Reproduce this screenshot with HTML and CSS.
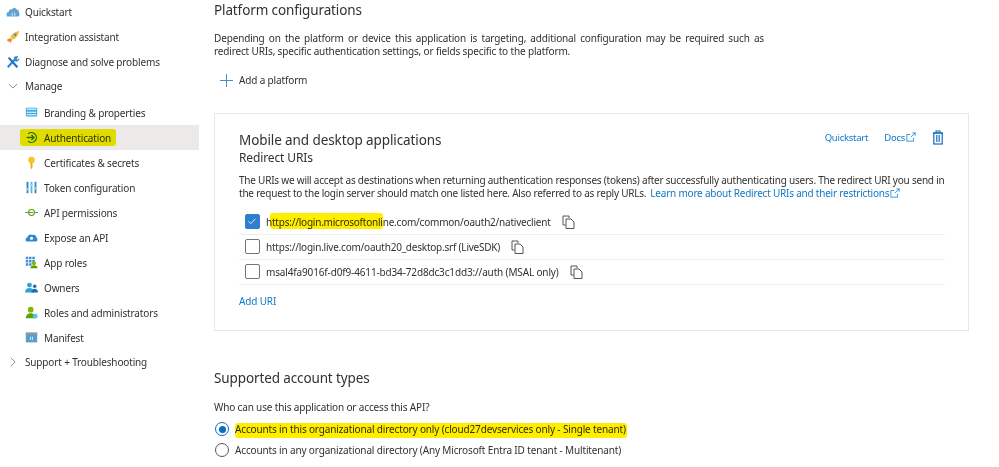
FILE: index.html
```html
<!DOCTYPE html>
<html lang="en">
<head>
<meta charset="utf-8">
<title>Authentication</title>
<link rel="stylesheet" href="styles.css">
</head>
<body>
<div class="page">
  <nav class="side">
    <a class="row top h25"><svg class="ic" viewBox="0 0 16 16"><path fill="#5ba3d9" d="M1 13c-1-3 0-5 2-5 0-2 2-4 4-3 1-2 4-2 5 0 2 0 3 2 3 4 1 2 0 4-1 4z"/><path fill="#fff" opacity=".7" d="M7 7l1 5H6zM10 7l1 5H9z"/></svg><span>Quickstart</span></a>
    <a class="row top h25"><svg class="ic" viewBox="0 0 16 16"><path fill="#f08a24" d="M1 11l4-2 2 2-2 4-1-2-2 0z"/><path fill="#f5b93a" d="M5 8c2-4 5-6 10-7-1 5-3 8-7 10z"/><circle cx="10.5" cy="5.5" r="1.4" fill="#3c8fd6"/></svg><span>Integration assistant</span></a>
    <a class="row top h25"><svg class="ic" viewBox="0 0 16 16"><path stroke="#2b88d8" stroke-width="2.4" fill="none" d="M2 14L11 4"/><path stroke="#1f6fb5" stroke-width="2.4" fill="none" d="M3 3l10 11"/><path fill="#2b88d8" d="M9 2l5-1-1 2-1 2 2 0 1-2 0 3-4 2z"/></svg><span>Diagnose and solve problems</span></a>
    <a class="row top h24"><svg class="chev" viewBox="0 0 12 12"><path d="M1 3.5l5 5 5-5" fill="none" stroke="#666" stroke-width=".9"/></svg><span>Manage</span></a>
    <a class="row sub h27"><svg class="ic" viewBox="0 0 16 16"><rect x="1" y="2" width="14" height="11" rx="1" fill="#3aa7e3"/><rect x="2" y="3" width="12" height="2" fill="#bfe6fb"/><rect x="2" y="7" width="12" height="1.4" fill="#e6f6ff"/><rect x="2" y="10" width="12" height="1.4" fill="#e6f6ff"/></svg><span>Branding &amp; properties</span></a>
    <a class="row sub h25 active"><svg class="ic" viewBox="0 0 16 16"><path d="M4 3.5A6 6 0 1 1 4 12.500" fill="none" stroke="#1f7a1f" stroke-width="1.6"/><path d="M2 8h9M8 5l3 3-3 3" fill="none" stroke="#1f7a1f" stroke-width="1.6"/></svg><span>Authentication</span></a>
    <a class="row sub h25"><svg class="ic" viewBox="0 0 16 16"><circle cx="8" cy="5" r="4" fill="#f7c325"/><path fill="#eba91c" d="M6.800 8h2.400v7l-1.200 1-1.200-1z"/></svg><span>Certificates &amp; secrets</span></a>
    <a class="row sub h25"><svg class="ic" viewBox="0 0 16 16"><rect x="2" y="1" width="2.200" height="14" fill="#2d7fc7"/><rect x="6.900" y="1" width="2.200" height="14" fill="#59b4d9"/><rect x="11.800" y="1" width="2.200" height="14" fill="#2d7fc7"/><rect x="1.500" y="9" width="3.200" height="2.500" fill="#a7d7f0"/><rect x="6.400" y="4" width="3.200" height="2.500" fill="#a7d7f0"/><rect x="11.300" y="8" width="3.200" height="2.500" fill="#a7d7f0"/></svg><span>Token configuration</span></a>
    <a class="row sub h25"><svg class="ic" viewBox="0 0 16 16"><path d="M0 8h16" stroke="#3aa0a8" stroke-width="1.300"/><circle cx="8" cy="8" r="3.600" fill="#fff" stroke="#57a300" stroke-width="1.300"/><path d="M5 8h5" stroke="#57a300" stroke-width="1.300"/></svg><span>API permissions</span></a>
    <a class="row sub h25"><svg class="ic" viewBox="0 0 16 16"><path fill="#2b88d8" d="M3 13c-3 0-3-5 0-5 0-3 4-5 6-3 3-1 5 1 5 3 2 1 2 5-1 5z"/><circle cx="8" cy="9" r="1.900" fill="#fff"/></svg><span>Expose an API</span></a>
    <a class="row sub h25"><svg class="ic" viewBox="0 0 16 16"><path fill="#3f8ed0" d="M1 1h3v3H1zM5 1h3v3H5zM9 1h3v3H9zM1 5h3v3H1zM5 5h3v3H5zM9 5h3v3H9zM1 9h3v3H1zM5 9h3v3H5z"/><circle cx="11" cy="9" r="2.500" fill="#7fba00"/><path fill="#57a300" d="M6.500 15c0-5 9-5 9 0z"/></svg><span>App roles</span></a>
    <a class="row sub h25"><svg class="ic" viewBox="0 0 16 16"><circle cx="5.500" cy="5" r="3" fill="#2fa3d6"/><path fill="#2fa3d6" d="M0 14c0-7 11-7 11 0z"/><circle cx="12" cy="6.500" r="2.200" fill="#1c6fb3"/><path fill="#1c6fb3" d="M8 14c0-6 8-6 8 0z"/></svg><span>Owners</span></a>
    <a class="row sub h25"><svg class="ic" viewBox="0 0 16 16"><circle cx="7" cy="4.500" r="3.500" fill="#7fba00"/><path fill="#57a300" d="M1 15c0-8 12-8 12 0z"/><circle cx="12.500" cy="12.500" r="3" fill="#59c2e8"/></svg><span>Roles and administrators</span></a>
    <a class="row sub h25"><svg class="ic" viewBox="0 0 16 16"><rect x="1" y="2" width="14" height="12" fill="#5a9fcb"/><rect x="1" y="2" width="14" height="2.500" fill="#8a9aa6"/><path d="M6.800 7v4M9.200 7v4" stroke="#fff" stroke-width=".9"/></svg><span>Manifest</span></a>
    <a class="row top h24"><svg class="chev" viewBox="0 0 12 12"><path d="M3.500 1l5 5-5 5" fill="none" stroke="#666" stroke-width=".9"/></svg><span>Support + Troubleshooting</span></a>
    <i class="mark mark-auth"></i>
  </nav>

  <main class="main">
    <h2 class="h-first">Platform configurations</h2>
    <p class="intro">Depending on the platform or device this application is targeting, additional configuration may be required such as redirect URIs, specific authentication settings, or fields specific to the platform.</p>
    <div class="add"><svg class="plus" viewBox="0 0 14 14"><path d="M7 0v14M0 7h14" stroke="#3b84c4" stroke-width="1"/></svg><span>Add a platform</span></div>

    <section class="card">
      <div class="card-head">
        <h3>Mobile and desktop applications</h3>
        <div class="tools">
          <a class="lnk small">Quickstart</a>
          <a class="lnk docs small">Docs<svg class="ext" viewBox="0 0 12 12"><path d="M9 7v4H1V3h4M6 6l5-5M7.500 1H11v3.500" fill="none" stroke="#0078d4" stroke-width=".9"/></svg></a>
          <svg class="trash" viewBox="0 0 12 15"><path d="M1 3h10M4 3V1h4v2" fill="none" stroke="#0f6cbd" stroke-width="1.100"/><rect x="1.800" y="3" width="8.400" height="11" fill="none" stroke="#0f6cbd" stroke-width="1.200"/><path d="M4.500 5v7M6 5v7M7.500 5v7" stroke="#0f6cbd" stroke-width=".8"/></svg>
        </div>
      </div>
      <h4>Redirect URIs</h4>
      <div class="desc">
        <div>The URIs we will accept as destinations when returning authentication responses (tokens) after successfully authenticating users. The redirect URI you send in</div>
        <div class="line2"><span>the request to the login server should match one listed here. Also referred to as reply URLs.</span><a class="lnk">Learn more about Redirect URIs and their restrictions<svg class="ext" viewBox="0 0 12 12"><path d="M9 7v4H1V3h4M6 6l5-5M7.500 1H11v3.500" fill="none" stroke="#0078d4" stroke-width=".9"/></svg></a></div>
      </div>
      <ul class="uris">
        <li><span class="cb on"><svg viewBox="0 0 14 14"><path d="M3 7.500l2.600 2.600L11 4.500" fill="none" stroke="#fff" stroke-width="1"/></svg></span><span class="uri narrow">https://login.microsoftonline.com/common/oauth2/nativeclient</span><svg class="copy" viewBox="0 0 13 14"><path d="M1 1h6l0 2M1 1v9h2.500" fill="none" stroke="#555" stroke-width="1"/><path d="M4 4h5l3 3v6.500H4z" fill="#fff" stroke="#555" stroke-width="1"/></svg></li>
        <li><span class="cb"></span><span class="uri narrow">https://login.live.com/oauth20_desktop.srf (LiveSDK)</span><svg class="copy" viewBox="0 0 13 14"><path d="M1 1h6l0 2M1 1v9h2.500" fill="none" stroke="#555" stroke-width="1"/><path d="M4 4h5l3 3v6.500H4z" fill="#fff" stroke="#555" stroke-width="1"/></svg></li>
        <li><span class="cb"></span><span class="uri">msal4fa9016f-d0f9-4611-bd34-72d8dc3c1dd3://auth (MSAL only)</span><svg class="copy" viewBox="0 0 13 14"><path d="M1 1h6l0 2M1 1v9h2.500" fill="none" stroke="#555" stroke-width="1"/><path d="M4 4h5l3 3v6.500H4z" fill="#fff" stroke="#555" stroke-width="1"/></svg></li>
      </ul>
      <a class="lnk add-uri">Add URI</a>
    </section>

    <h2 class="h-second">Supported account types</h2>
    <p class="who">Who can use this application or access this API?</p>
    <div class="radio first"><span class="rd on"></span><span>Accounts in this organizational directory only (cloud27devservices only - Single tenant)</span></div>
    <div class="radio"><span class="rd"></span><span>Accounts in any organizational directory (Any Microsoft Entra ID tenant - Multitenant)</span></div>
  </main>
  <i class="mark mark-uri"></i>
  <i class="mark mark-acct"></i>
</div>
</body>
</html>
```
FILE: styles.css
```css
* { box-sizing: border-box; }
html, body { margin: 0; padding: 0; background: #fff; }
body { width: 999px; height: 467px; overflow: hidden; font-family: "Noto Sans", "Open Sans", sans-serif; font-size: 10px; letter-spacing: -0.15px; color: #323130; }
.page { position: relative; display: flex; width: 999px; height: 467px; overflow: hidden; }
.side { position: relative; flex: none; width: 199px; margin-top: -1px; }
.row { display: flex; align-items: center; color: #323130; white-space: nowrap; }
.h24 { height: 24px; }
.h25 { height: 25px; }
.h27 { height: 27px; padding-top: 2px; }
.top { padding-left: 6px; gap: 5px; }
.top .ic { width: 14px; height: 14px; }
.top .chev { width: 10px; height: 10px; margin: 0 2px 0 2px; flex: none; }
.sub { padding-left: 25px; gap: 6px; }
.ic { width: 13px; height: 13px; flex: none; }
.active { background: #ebeae9; }
.main { flex: none; width: 770px; margin-left: 15px; }
h2 { margin: 0; font-weight: 400; font-size: 13.5px; letter-spacing: -0.12px; line-height: 20px; color: #323130; }
.h-first { height: 21px; }
.intro { margin: 11px 0 0; width: 550px; line-height: 13px; text-align: justify; }
.add { display: flex; align-items: center; gap: 6px; margin-top: 14px; padding-left: 6px; height: 16px; }
.plus { width: 13px; height: 13px; }
.card { margin-top: 25px; width: 755px; height: 218px; border: 1px solid #e6e6e6; padding: 17px 24px 0; }
.card-head { display: flex; justify-content: space-between; align-items: flex-start; }
h3 { margin: 0; font-weight: 400; font-size: 13.5px; letter-spacing: -0.1px; line-height: 18px; }
.tools { display: flex; align-items: center; gap: 16px; margin-top: -2px; height: 16px; }
.lnk { color: #0f78c8; }
.small { font-size: 9.5px; letter-spacing: -0.25px; }
.docs { display: flex; align-items: center; }
.ext { width: 10px; height: 10px; margin-left: 1px; vertical-align: -1px; }
.trash { width: 12px; height: 15px; }
h4 { margin: 0; font-weight: 400; font-size: 12px; letter-spacing: -0.12px; line-height: 18px; }
.desc { margin: 7px 0 0; line-height: 13px; width: 706px; white-space: nowrap; letter-spacing: -0.22px; }
.line2 { display: flex; gap: 4px; }
.uris { list-style: none; margin: 9.500px 0 0; padding: 0; width: 706px; }
.uris li { display: flex; align-items: center; height: 25px; border-bottom: 1px solid #eeeeee; padding-left: 6px; }
.cb { flex: none; width: 15px; height: 15px; border: 1.400px solid #757575; border-radius: 2px; margin-right: 6px; background: #fff; }
.cb.on { background: #2f7fd0; border-color: #2f7fd0; }
.cb svg { display: block; width: 12px; height: 12px; }
.narrow { letter-spacing: -0.22px; }
.copy { width: 13px; height: 14px; margin: 1px 0 0 11px; flex: none; }
.add-uri { display: block; margin-top: 9px; line-height: 14px; }
.h-second { margin-top: 37px; }
.who { margin: 12px 0 0; line-height: 14px; }
.radio { display: flex; align-items: center; gap: 6px; height: 21px; }
.radio.first { margin-top: 4.500px; }
.rd { flex: none; width: 14px; height: 14px; margin-left: 1px; border: 1px solid #555; border-radius: 50%; background: #fff; position: relative; }
.rd.on { border-color: #0f6cbd; }
.rd.on::after { content: ""; position: absolute; left: 2.500px; top: 2.500px; width: 7px; height: 7px; border-radius: 50%; background: #0f6cbd; }
.mark { position: absolute; display: block; background: #f4f000; mix-blend-mode: multiply; border-radius: 3px; }
.mark-auth { left: 20px; top: 130px; width: 96px; height: 17px; }
.mark-uri { left: 270px; top: 213px; width: 113px; height: 16px; background: #ffee00; }
.mark-acct { left: 235px; top: 423px; width: 392px; height: 15px; background: #ffee00; }
```
